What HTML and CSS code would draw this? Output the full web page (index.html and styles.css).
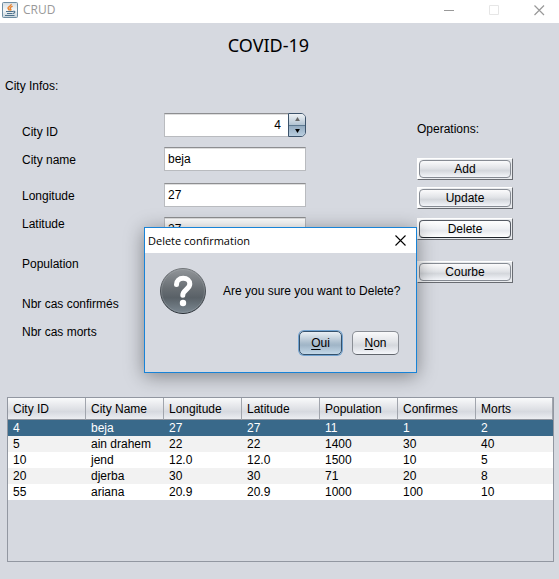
FILE: index.html
```html
<!DOCTYPE html>
<html lang="en">
<head>
<meta charset="utf-8">
<title>CRUD</title>
<meta name="viewport" content="width=device-width, initial-scale=1">
<link rel="stylesheet" href="styles.css">
</head>
<body>
<div class="window">
  <header class="titlebar">
    <svg class="app-icon" viewBox="0 0 16 16" aria-hidden="true">
      <defs>
        <linearGradient id="appBg" x1="0" y1="0" x2="0" y2="1">
          <stop offset="0" stop-color="#d3dce2"/>
          <stop offset="0.5" stop-color="#f6f8f9"/>
          <stop offset="1" stop-color="#c5d1d9"/>
        </linearGradient>
      </defs>
      <rect x="0.5" y="0.5" width="15" height="15" rx="1" fill="url(#appBg)" stroke="#6e8da2"/>
      <path d="M9.200 2c.5 2-3.400 2.400-3.200 4.200.1 1 1.300 1.300 1.500 2.300M10.600 4.200c-2.600 1.100-3 1.900-2 2.800.6.6.3 1-.2 1.500" fill="none" stroke="#e8822e" stroke-width="1.400"/>
      <path d="M4 9.500h7M5 11.500h5.500M3 13.500h9.500M11 9.300c2.500-.5 2.500 1.700 0 2.200" fill="none" stroke="#4c718c" stroke-width="1.100"/>
    </svg>
    <span class="app-name">CRUD</span>
    <div class="window-controls">
      <button type="button" class="control" aria-label="Minimize">
        <svg viewBox="0 0 11 11"><path d="M0 5.500h10" stroke="#999"/></svg>
      </button>
      <button type="button" class="control" aria-label="Maximize">
        <svg viewBox="0 0 11 11"><path d="M.5.500h9v9h-9z" fill="none" stroke="#e6e6e6"/></svg>
      </button>
      <button type="button" class="control" aria-label="Close">
        <svg viewBox="0 0 11 11"><path d="M.5.500l9.500 9.500M10 .5L.5 10" stroke="#999" stroke-width="1.200"/></svg>
      </button>
    </div>
  </header>

  <main class="content">
    <h1 class="title">COVID-19</h1>
    <h2 class="section">City Infos:</h2>
    <div class="editor">
      <form class="form">
        <div class="labels">
          <label for="city-id">City ID</label>
          <label for="city-name" class="after-id">City name</label>
          <label for="longitude" class="after-name">Longitude</label>
          <label for="latitude" class="after-id">Latitude</label>
          <label for="population" class="spaced">Population</label>
          <label for="confirmed" class="spaced">Nbr cas confirmés</label>
          <label for="deaths" class="after-id">Nbr cas morts</label>
        </div>
        <div class="fields">
          <div class="field-group">
            <div class="spinner">
              <input class="field" id="city-id" type="text" inputmode="numeric" value="4">
              <div class="steps">
                <button type="button" class="step" aria-label="Increase"><svg viewBox="0 0 6 5"><path d="M3 0l3 5H0z" fill="#666"/></svg></button>
                <button type="button" class="step down" aria-label="Decrease"><svg viewBox="0 0 6 5"><path d="M0 0h6L3 5z" fill="#000"/></svg></button>
              </div>
            </div>
            <input class="field" id="city-name" type="text" value="beja">
          </div>
          <div class="field-group">
            <input class="field" id="longitude" type="text" value="27">
            <input class="field" id="latitude" type="text" value="27">
          </div>
          <div class="field-group">
            <input class="field" id="population" type="text" value="11">
            <input class="field" id="confirmed" type="text" value="1">
            <input class="field" id="deaths" type="text" value="2">
          </div>
        </div>
      </form>
      <section class="operations">
        <h2 class="operations-title">Operations:</h2>
        <div class="bevel"><button type="button" class="button">Add</button></div>
        <div class="bevel"><button type="button" class="button">Update</button></div>
        <div class="bevel lower"><button type="button" class="button focus">Delete</button></div>
        <div class="bevel last"><button type="button" class="button">Courbe</button></div>
      </section>
    </div>

    <div class="table-pane">
      <table class="table">
        <thead>
          <tr><th>City ID</th><th>City Name</th><th>Longitude</th><th>Latitude</th><th>Population</th><th>Confirmes</th><th>Morts</th></tr>
        </thead>
        <tbody>
          <tr class="selected"><td>4</td><td>beja</td><td>27</td><td>27</td><td>11</td><td>1</td><td>2</td></tr>
          <tr><td>5</td><td>ain drahem</td><td>22</td><td>22</td><td>1400</td><td>30</td><td>40</td></tr>
          <tr><td>10</td><td>jend</td><td>12.0</td><td>12.0</td><td>1500</td><td>10</td><td>5</td></tr>
          <tr><td>20</td><td>djerba</td><td>30</td><td>30</td><td>71</td><td>20</td><td>8</td></tr>
          <tr><td>55</td><td>ariana</td><td>20.9</td><td>20.9</td><td>1000</td><td>100</td><td>10</td></tr>
        </tbody>
      </table>
    </div>
  </main>

  <div class="overlay">
    <div class="dialog" role="dialog" aria-modal="true" aria-labelledby="dialog-title">
      <div class="dialog-bar">
        <span id="dialog-title">Delete confirmation</span>
        <button type="button" class="dialog-close" aria-label="Close dialog">
          <svg viewBox="0 0 11 11"><path d="M.5.500l10 10M10.500.5l-10 10" stroke="#000" stroke-width="1.100"/></svg>
        </button>
      </div>
      <div class="dialog-body">
        <div class="message">
          <svg class="question" viewBox="0 0 46 46" aria-hidden="true">
            <defs>
              <linearGradient id="ball" x1="0" y1="0" x2="0" y2="1">
                <stop offset="0" stop-color="#92969a"/>
                <stop offset="0.450" stop-color="#686e73"/>
                <stop offset="0.650" stop-color="#596167"/>
                <stop offset="1" stop-color="#7d8993"/>
              </linearGradient>
              <linearGradient id="rim" x1="0" y1="0" x2="0" y2="1">
                <stop offset="0" stop-color="#72767a"/>
                <stop offset="1" stop-color="#262c33"/>
              </linearGradient>
            </defs>
            <circle cx="23" cy="23" r="22.500" fill="url(#ball)" stroke="url(#rim)"/>
            <circle cx="23" cy="23" r="21.500" fill="none" stroke="#b0b5ba" stroke-opacity="0.300"/>
            <path d="M16.500 16.500c0-3.700 2.700-6.200 6.700-6.200 3.900 0 6.600 2.300 6.600 5.800 0 5.200-7 5.700-7 11.200" fill="none" stroke="#fff" stroke-width="5" stroke-linecap="round"/>
            <circle cx="23" cy="35" r="3.200" fill="#fff"/>
          </svg>
          <p>Are you sure you want to Delete?</p>
        </div>
        <div class="actions">
          <button type="button" class="choice primary"><u>O</u>ui</button>
          <button type="button" class="choice"><u>N</u>on</button>
        </div>
      </div>
    </div>
  </div>
</div>
</body>
</html>
```

FILE: styles.css
```css
* {
  box-sizing: border-box;
}

body {
  margin: 0;
  background: #d6d9e0;
  color: #000;
  font: 12px/16px "Liberation Sans", Arial, sans-serif;
}

button,
input {
  margin: 0;
  padding: 0;
  font: inherit;
  color: inherit;
}

h1,
h2,
p {
  margin: 0;
  font-size: inherit;
  font-weight: normal;
}

.window {
  position: relative;
  display: flex;
  flex-direction: column;
  min-height: 100vh;
}

.titlebar {
  display: flex;
  height: 23px;
  padding-left: 2px;
  background: #fff;
}

.app-icon {
  width: 16px;
  height: 16px;
  margin-top: 2px;
}

.app-name {
  margin-left: 5px;
  color: #999;
  font: 12px/19px "Open Sans", sans-serif;
}

.window-controls {
  display: flex;
  gap: 5px;
  margin-left: auto;
}

.control {
  width: 40px;
  height: 21px;
  border: 0;
  background: none;
}

.control svg,
.dialog-close svg {
  display: block;
  width: 11px;
  height: 11px;
  margin: 0 auto;
}

.content {
  display: flex;
  flex: 1;
  flex-direction: column;
  padding: 0 5px 17px 7px;
}

.title {
  padding-right: 24px;
  font: 18px/44px "Noto Sans", sans-serif;
  text-align: center;
}

.section {
  margin: 11px 0 19px -2px;
}

.editor {
  display: flex;
  justify-content: space-between;
  padding: 0 41px 0 15px;
}

.form {
  display: flex;
}

.labels {
  display: flex;
  flex-direction: column;
  width: 142px;
  padding-top: 11px;
}

.after-id {
  margin-top: 12px;
}

.after-name {
  margin-top: 20px;
}

.spaced {
  margin-top: 24px;
}

.fields {
  display: flex;
  flex-direction: column;
  gap: 12px;
  width: 142px;
}

.field-group {
  display: flex;
  flex-direction: column;
  gap: 10px;
}

.field {
  width: 100%;
  height: 24px;
  padding: 0 3px;
  border: 1px solid #b9bbbf;
  border-top: 1px solid #8d8e91;
  background: #fff;
  box-shadow: inset 0 1px #dedede;
}

.spinner {
  display: flex;
}

.spinner .field {
  flex: 1;
  min-width: 0;
  padding-right: 7px;
  border-right: 0;
  text-align: right;
}

.steps {
  display: flex;
  flex-direction: column;
  width: 18px;
  border: 1px solid #3c536b;
  border-radius: 0 5px 5px 0;
  overflow: hidden;
}

.step {
  display: flex;
  flex: 1;
  align-items: center;
  justify-content: center;
  border: 0;
  background: linear-gradient(#eff3f6, #b2c3d2);
}

.step.down {
  border-top: 1px solid #5d7991;
  background: linear-gradient(#93abc0, #b9cedf);
}

.step svg {
  width: 5px;
  height: 4px;
}

.operations {
  width: 96px;
}

.operations-title {
  margin: 8px 0 21px;
}

.bevel {
  height: 22px;
  margin-bottom: 7px;
  border: 1px solid;
  border-color: #fff #696c72 #696c72 #fff;
  background: linear-gradient(90deg, #fff, #e9ebee 8px);
}

.bevel.lower {
  margin-top: 9px;
}

.bevel.last {
  margin-top: 21px;
}

.button {
  display: block;
  width: calc(100% - 2px);
  height: 18px;
  margin: 1px auto;
  border: 1px solid #868b93;
  border-radius: 4px;
  background: linear-gradient(#fbfbfc, #e2e4e8 45%, #d4d7dc 60%, #f3f5f9);
}

.button.focus {
  border-color: #565b64;
  border-bottom-color: #20252c;
  background: linear-gradient(#fff, #eef0f3 50%, #e6e8ed 60%, #fff);
}

.table-pane {
  flex: 1;
  margin-top: 52px;
  border: 1px solid #9297a1;
}

.table {
  width: 100%;
  border-spacing: 0;
  table-layout: fixed;
}

.table th {
  width: 78px;
  height: 22px;
  padding: 0 5px;
  border-right: 1px solid #a1a5ad;
  border-bottom: 1px solid #8f949d;
  background: linear-gradient(#f9fafb, #dddfe4 55%, #d6d9df 65%, #eceef2);
  font-weight: normal;
  text-align: left;
}

.table th:last-child {
  width: auto;
}

.table td {
  height: 16px;
  padding: 0 5px;
  line-height: 16px;
}

.table tbody tr {
  background: #fff;
}

.table tbody tr:nth-child(even) {
  background: #f2f2f2;
}

.table tbody .selected {
  background: #39698a;
  color: #fff;
}

.overlay {
  position: absolute;
  inset: 0;
  display: grid;
  place-items: center;
  padding: 21px 0 0 2px;
}

.dialog {
  width: 273px;
  border: 1px solid #1883d7;
  background: #d6d9e0;
  box-shadow: 0 3px 18px rgba(0, 0, 0, 0.4);
}

.dialog-bar {
  display: flex;
  align-items: center;
  justify-content: space-between;
  height: 25px;
  padding: 0 10px 0 3px;
  background: #fff;
  font: 11px/24px "Open Sans", sans-serif;
}

.dialog-close {
  border: 0;
  background: none;
}

.dialog-body {
  padding: 15px 15px 17px;
}

.message {
  display: flex;
  align-items: center;
  gap: 17px;
}

.question {
  width: 46px;
  height: 46px;
}

.actions {
  display: flex;
  justify-content: flex-end;
  gap: 10px;
  margin: 17px 2px 0 0;
}

.choice {
  width: 47px;
  height: 24px;
  border: 1px solid #8a8e95;
  border-bottom-color: #62666d;
  border-radius: 5px;
  background: linear-gradient(#fafafb, #e1e3e7 45%, #d5d8dd 60%, #f5f7fb);
}

.choice.primary {
  width: 43px;
  border-color: #34516c;
  background: linear-gradient(#e9eff4, #a9bccc 50%, #a0b5c7 60%, #c3d8e8);
  box-shadow: 0 0 0 1px #73a4d1;
}

u {
  text-underline-offset: 2px;
}
```
